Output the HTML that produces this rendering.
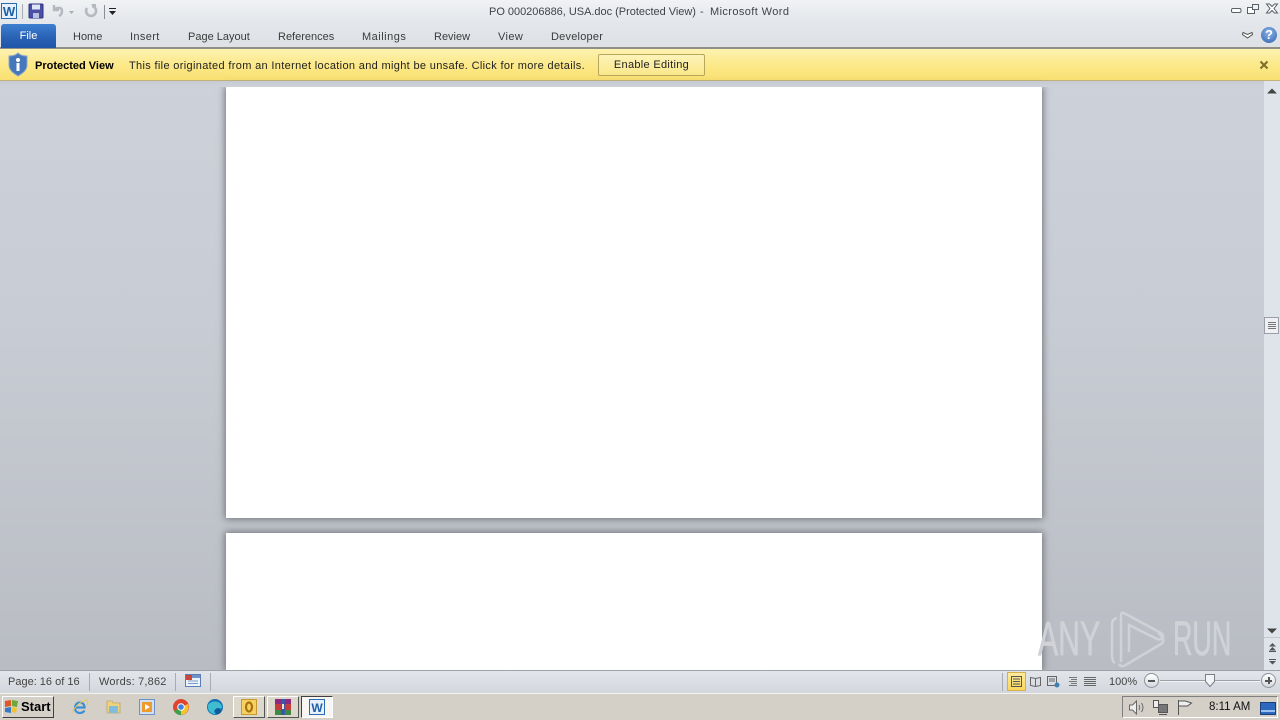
<!DOCTYPE html>
<html><head><meta charset="utf-8"><style>
*{box-sizing:border-box}
html,body{margin:0;padding:0;width:1280px;height:720px;overflow:hidden;background:#cfd3da;font-family:"Liberation Sans",sans-serif;font-size:11px;color:#3b3b3b}
.a{position:absolute;white-space:nowrap}
svg{position:absolute;overflow:visible}
</style></head><body>
<!-- title bar + ribbon tabs -->
<div class="a" style="left:0;top:0;width:1280px;height:48px;background:linear-gradient(#f0f2f4,#e3e6ea 50%,#dde1e6)"></div>
<div class="a" style="left:0;top:47px;width:1280px;height:2px;background:#8f8f88"></div>
<div class="a" style="left:489px;top:6px;font-size:11px;color:#40444a;letter-spacing:-.02px">PO 000206886, USA.doc (Protected View)</div>
<div class="a" style="left:700px;top:6px;font-size:11px;color:#40444a">-</div>
<div class="a" style="left:710px;top:6px;font-size:11px;color:#40444a;letter-spacing:.4px">Microsoft Word</div>
<!-- W icon -->
<svg style="left:0;top:2px" width="18" height="18"><rect x="1.500" y="1.500" width="15" height="15" fill="#e8f1fb" stroke="#2a6cb0"/><text x="9" y="14" text-anchor="middle" font-family="Liberation Sans" font-weight="700" font-size="13" fill="#1c5fa8">W</text></svg>
<div class="a" style="left:22px;top:4px;width:1px;height:15px;background:#a9adb3"></div>
<svg style="left:28px;top:3px" width="16" height="16"><rect x="1" y="1" width="14" height="14" rx="1" fill="#4a4fa5" stroke="#2d3080"/><rect x="4" y="1.500" width="8" height="5" fill="#dfe6f5"/><rect x="5" y="10" width="6" height="5" fill="#b9bfe0"/></svg>
<svg style="left:50px;top:3px" width="24" height="16" fill="none" stroke="#b4b8bf" stroke-width="2.500"><path d="M4 2v5h5M4 7c3-3 8-3 8 1 0 2-1 4-3 5"/><path d="M19 8h5l-2.500 3z" fill="#a8adb5" stroke="none"/></svg>
<svg style="left:83px;top:3px" width="14" height="16" fill="none" stroke="#b4b8bf" stroke-width="2.500"><path d="M9 3a5 5 0 1 1-5 2"/><path d="M8 1h5v5z" fill="#b4b8bf" stroke="none"/></svg>
<div class="a" style="left:104px;top:5px;width:1px;height:14px;background:#8a8e94"></div>
<svg style="left:108px;top:7px" width="9" height="10"><rect x="1" y="1" width="7" height="1" fill="#222"/><path d="M1 4h7l-3.500 4z" fill="#222"/></svg>
<!-- window buttons -->
<svg style="left:1228px;top:0" width="52" height="16" fill="none" stroke="#5a6068"><rect x="3.500" y="8.500" width="9.500" height="4" rx="1.500" fill="#fff"/><rect x="19.500" y="7.500" width="7" height="6" fill="#fff"/><rect x="24.500" y="4.500" width="6" height="5" fill="#eef0f2"/><path d="M38.500 4l3 0 2.500 2.500 2.500-2.500 3 0-3.500 4.500 3.500 4.500-3 0-2.500-2.500-2.500 2.500-3 0 3.500-4.500z" fill="#fff"/></svg>
<svg style="left:1242px;top:31px" width="11" height="8" fill="#fff" stroke="#555"><path d="M1 1.500l4.500 2 4.500-2 .5 2-5 3.500-5-3.500z"/></svg>
<div class="a" style="left:1261px;top:27px;width:16px;height:16px;border-radius:50%;background:radial-gradient(circle at 50% 35%,#8fb4e6,#2f62b0);color:#fff;font-weight:700;font-size:13px;line-height:16px;text-align:center">?</div>
<!-- tabs -->
<div class="a" style="left:1px;top:24px;width:55px;height:24px;border-radius:3px 3px 0 0;background:linear-gradient(#3d7fd0,#2a62b5 55%,#1e55a8);color:#fff;text-align:center;line-height:25px">File</div>
<div class="a" style="left:73px;top:31px">Home</div>
<div class="a" style="left:130px;top:31px;letter-spacing:.35px">Insert</div>
<div class="a" style="left:188px;top:31px">Page Layout</div>
<div class="a" style="left:278px;top:31px">References</div>
<div class="a" style="left:362px;top:31px;letter-spacing:.5px">Mailings</div>
<div class="a" style="left:434px;top:31px">Review</div>
<div class="a" style="left:498px;top:31px;letter-spacing:.4px">View</div>
<div class="a" style="left:551px;top:31px;letter-spacing:.22px">Developer</div>
<!-- protected bar -->
<div class="a" style="left:0;top:49px;width:1280px;height:32px;background:linear-gradient(#fdf2b0,#fce98a 50%,#f9e071);border-bottom:1px solid #bfb37a"></div>
<svg style="left:8px;top:52px" width="20" height="25"><path d="M10 1c2 2 5 3 9 3v9c0 5-4 8-9 11-5-3-9-6-9-11V4c4 0 7-1 9-3z" fill="#4477bb" stroke="#8fa6c6"/><circle cx="10" cy="8" r="2" fill="#fff"/><rect x="8.500" y="11" width="3" height="8" fill="#fff"/></svg>
<div class="a" style="left:35px;top:60px;font-weight:700;color:#000">Protected View</div>
<div class="a" style="left:129px;top:60px;color:#222;letter-spacing:.335px">This file originated from an Internet location and might be unsafe. Click for more details.</div>
<div class="a" style="left:598px;top:54px;width:107px;height:22px;border:1px solid #b5a75c;border-radius:2px;background:linear-gradient(#fdf3ba,#fbe88a);text-align:center;line-height:21px;color:#222;letter-spacing:.3px">Enable Editing</div>
<svg style="left:1259px;top:60px" width="10" height="10" stroke="#7d6c28" stroke-width="2"><path d="M1.500 1.500l7 7M8.500 1.500l-7 7"/></svg>
<!-- document area -->
<div class="a" style="left:0;top:81px;width:1280px;height:589px;background:linear-gradient(#cdd1d9,#c8ccd4 40%,#b9bcc3)"></div>
<div class="a" style="left:226px;top:87px;width:816px;height:431px;background:#fff;box-shadow:0 0 7px 1px #6f7278"></div>
<div class="a" style="left:226px;top:533px;width:816px;height:137px;background:#fff;box-shadow:0 0 7px 1px #6f7278"></div>
<div class="a" style="left:0;top:81px;width:1280px;height:6px;background:linear-gradient(#c6cad1,#cdd1d9)"></div>
<!-- scrollbar -->
<div class="a" style="left:1264px;top:81px;width:16px;height:589px;background:#dfe3ea"></div>
<svg style="left:1267px;top:88px" width="10" height="6"><path d="M0 5.500L5 .5l5 5z" fill="#444"/></svg>
<div class="a" style="left:1264px;top:317px;width:15px;height:17px;border:1px solid #9a9ea6;background:#eef0f4"></div>
<svg style="left:1268px;top:321px" width="8" height="9" stroke="#777"><path d="M0 1.500h8M0 3.500h8M0 5.500h8M0 7.500h8"/></svg>
<svg style="left:1267px;top:628px" width="10" height="6"><path d="M0 .5h10L5 5.500z" fill="#444"/></svg>
<div class="a" style="left:1264px;top:637px;width:16px;height:1px;background:#c4c8ce"></div>
<svg style="left:1269px;top:643px" width="7" height="22" fill="#555"><path d="M3.500 0L7 3.500H0zM3.500 4L7 7.500H0zM0 8h7v1H0zM0 16h7v1H0zM0 18h7L3.500 21.500z"/></svg>
<!-- watermark -->
<div class="a" style="left:1038px;top:615px;font-size:48px;line-height:50px;color:#d0d2d7;-webkit-text-stroke:.7px #d0d2d7;transform:scaleX(.63);transform-origin:0 0">ANY</div>
<svg style="left:0;top:0" width="1280" height="720" fill="none" stroke="#d0d2d7" stroke-width="2.500"><path d="M1117 618q-5 1-5 7V656q0 5 3 7"/><path d="M1121 662V615q0-3 3-2L1161 633q4 3 0 6-2 1-4 0L1129 625V652"/><path d="M1158 633q6 4 5 8 0 2-2 3L1124 666q-3 1-5-2"/></svg>
<div class="a" style="left:1173px;top:615px;font-size:48px;line-height:50px;color:#d0d2d7;-webkit-text-stroke:.7px #d0d2d7;transform:scaleX(.56);transform-origin:0 0">RUN</div>
<!-- status bar -->
<div class="a" style="left:0;top:670px;width:1280px;height:23px;background:linear-gradient(#e2e5ea,#d3d7dd);border-top:1px solid #9fa3a9"></div>
<div class="a" style="left:0;top:693px;width:1280px;height:1px;background:#f4f4f2"></div>
<div class="a" style="left:8px;top:676px;color:#444">Page: 16 of 16</div>
<div class="a" style="left:89px;top:673px;width:1px;height:18px;background:#a8acb2"></div>
<div class="a" style="left:99px;top:676px;color:#444;letter-spacing:.2px">Words: 7,862</div>
<div class="a" style="left:175px;top:673px;width:1px;height:18px;background:#a8acb2"></div>
<svg style="left:185px;top:674px" width="16" height="13"><rect x=".5" y=".5" width="15" height="12" fill="#eef3fb" stroke="#5a7fb5"/><rect x="1" y="1" width="14" height="3" fill="#6f93c8"/><rect x="1" y="1" width="6" height="5" fill="#c9453a"/><path d="M3 7h10M3 9.500h10" stroke="#7a98c4"/></svg>
<div class="a" style="left:210px;top:673px;width:1px;height:18px;background:#a8acb2"></div>
<div class="a" style="left:1002px;top:673px;width:1px;height:18px;background:#a8acb2"></div>
<div class="a" style="left:1007px;top:672px;width:19px;height:19px;background:linear-gradient(#fdeb9e,#fbd65d);border:1px solid #d8b04a"></div>
<svg style="left:1011px;top:676px" width="11" height="11" fill="none" stroke="#555"><rect x=".5" y=".5" width="10" height="10"/><path d="M2 3h7M2 5.500h7M2 8h7"/></svg>
<svg style="left:1030px;top:676px" width="11" height="11" fill="none" stroke="#666"><path d="M.5 1.500l5 1 5-1v8l-5 1-5-1zM5.500 2.500v8"/></svg>
<svg style="left:1047px;top:676px" width="13" height="12" fill="none" stroke="#666"><rect x=".5" y=".5" width="9" height="9"/><path d="M2 3h6M2 5h6"/><circle cx="10" cy="9" r="2.500" fill="#3e7fb5" stroke="none"/></svg>
<svg style="left:1066px;top:676px" width="11" height="11" stroke="#777"><path d="M3 1.500h8M5 3.500h6M3 5.500h8M5 7.500h6M3 9.500h8"/></svg>
<svg style="left:1084px;top:676px" width="12" height="11" stroke="#666"><path d="M0 1.500h12M0 3.500h12M0 5.500h12M0 7.500h12M0 9.500h12"/></svg>
<div class="a" style="left:1109px;top:676px;color:#444">100%</div>
<div class="a" style="left:1144px;top:673px;width:15px;height:15px;border-radius:50%;border:1px solid #8e949c;background:linear-gradient(#fff,#d4d8de)"></div>
<div class="a" style="left:1148px;top:680px;width:7px;height:2px;background:#555"></div>
<div class="a" style="left:1160px;top:680px;width:100px;height:1px;background:#9aa0a8;box-shadow:0 1px 0 #f4f5f7"></div>
<svg style="left:1205px;top:674px" width="10" height="13"><path d="M.5 .5h9v7l-4.500 5-4.500-5z" fill="#f3f4f6" stroke="#7a7f87"/></svg>
<div class="a" style="left:1261px;top:673px;width:15px;height:15px;border-radius:50%;border:1px solid #8e949c;background:linear-gradient(#fff,#d4d8de)"></div>
<div class="a" style="left:1265px;top:680px;width:7px;height:2px;background:#555"></div>
<div class="a" style="left:1267.500px;top:677px;width:2px;height:7px;background:#555"></div>
<!-- taskbar -->
<div class="a" style="left:0;top:694px;width:1280px;height:26px;background:#d4d0c8"></div>
<div class="a" style="left:2px;top:696px;width:52px;height:22px;background:#d4d0c8;border:1px solid;border-color:#fff #404040 #404040 #fff;font-weight:700;font-size:13px;color:#000;line-height:20px;padding-left:18px">Start</div>
<svg style="left:4px;top:699px" width="15" height="15"><path d="M1 2l6-1v6l-6 1z" fill="#e0582a"/><path d="M8 1l6 1-1 6-5-1z" fill="#6fa83a"/><path d="M1 9l6-1v6l-6-1z" fill="#3a78c8"/><path d="M8 8l5 1-1 5-4-1z" fill="#f2c230"/></svg>
<svg style="left:72px;top:699px" width="17" height="16" fill="none"><path d="M3 8.500h9.500C12.500 5.500 10.500 3.500 8 3.500 5 3.500 3 6 3 9s2 5 5 5c2 0 3.500-1 4.500-2.500" stroke="#3a8fd8" stroke-width="2.200"/><path d="M1 14C0 11 7 3 14 1c2-.500 2.500 2 1 5" stroke="#e8c84a" stroke-width="1"/></svg>
<svg style="left:106px;top:699px" width="15" height="15"><path d="M1 2h5l1 2h7v10H1z" fill="#f0d27a" stroke="#b4934a" stroke-width=".6"/><rect x="3" y="7" width="9" height="7" fill="#7fbce0"/></svg>
<svg style="left:139px;top:699px" width="16" height="16"><rect x=".5" y=".5" width="15" height="15" fill="#cfe0f2" stroke="#6f93c4"/><rect x="3" y="3" width="10" height="10" fill="#ef9a2e"/><path d="M6 5l5 3-5 3z" fill="#fff"/></svg>
<svg style="left:173px;top:699px" width="16" height="16"><circle cx="8" cy="8" r="8" fill="#e0442f"/><path d="M8 8L1 12A8 8 0 0 0 10 16z" fill="#3ea14a"/><path d="M8 8l7-3A8 8 0 0 1 8 16z" fill="#f5c42c"/><circle cx="8" cy="8" r="3.800" fill="#fff"/><circle cx="8" cy="8" r="2.800" fill="#3f7fe0"/></svg>
<svg style="left:207px;top:699px" width="16" height="16"><circle cx="8" cy="8" r="8" fill="#1272b8"/><path d="M1 6c3-5 13-5 14 2 0 2-3 2-5 2-3 0-4 3-1 5-4 1-9-3-8-9z" fill="#3fbcd0"/><circle cx="11" cy="12" r="3" fill="#0e5a9a"/></svg>
<div class="a" style="left:233px;top:696px;width:32px;height:22px;background:#ddd8cc;border:1px solid;border-color:#fff #555 #555 #fff"></div>
<svg style="left:241px;top:699px" width="16" height="16"><rect x=".5" y=".5" width="15" height="15" fill="#f6d060" stroke="#c79a30"/><ellipse cx="8" cy="8" rx="3" ry="4.500" fill="none" stroke="#a8720f" stroke-width="2.200"/></svg>
<div class="a" style="left:267px;top:696px;width:32px;height:22px;background:#ddd8cc;border:1px solid;border-color:#fff #555 #555 #fff"></div>
<svg style="left:275px;top:699px" width="16" height="16"><rect width="16" height="5" fill="#8c2a82"/><rect y="5" width="16" height="6" fill="#c63b3b"/><rect y="11" width="16" height="5" fill="#3e8a44"/><rect x="6" width="4" height="16" fill="#3a57a8"/><rect x="7" y="5" width="2" height="5" fill="#f0e8d0"/></svg>
<div class="a" style="left:301px;top:696px;width:32px;height:22px;background:#f7f6f3;border:1px solid;border-color:#404040 #fff #fff #404040"></div>
<svg style="left:309px;top:699px" width="16" height="16"><rect x=".5" y=".5" width="15" height="15" fill="#e8f1fb" stroke="#2a6cb0"/><text x="8" y="13" text-anchor="middle" font-family="Liberation Sans" font-weight="700" font-size="12" fill="#1c5fa8">W</text></svg>
<!-- tray -->
<div class="a" style="left:1122px;top:696px;width:156px;height:22px;border:1px solid;border-color:#808080 #fff #fff #808080"></div>
<svg style="left:1129px;top:700px" width="16" height="15" fill="none" stroke="#666"><path d="M.5 5h3l4-4v13l-4-4h-3z" fill="#eee"/><path d="M10 5c1 2 1 3 0 5M12.500 3c2 3 2 6 0 9"/></svg>
<svg style="left:1153px;top:700px" width="16" height="15" fill="none" stroke="#555"><rect x=".5" y=".5" width="5" height="7" fill="#eee"/><rect x="5.500" y="4.500" width="9" height="8" fill="#777"/><path d="M6 14.500h8"/></svg>
<svg style="left:1177px;top:700px" width="16" height="15" fill="none" stroke="#555"><path d="M1.500 0v15"/><path d="M1.500 1h7l6 2-4 3h-9z" fill="#eee"/></svg>
<div class="a" style="left:1209px;top:701px;color:#111;font-size:11.500px">8:11 AM</div>
<svg style="left:1260px;top:702px" width="16" height="13"><rect x=".5" y=".5" width="15" height="12" fill="#2c68bd" stroke="#1c3f7a"/><rect x="1" y="8" width="14" height="2" fill="#9ac0ec"/></svg>
</body></html>
